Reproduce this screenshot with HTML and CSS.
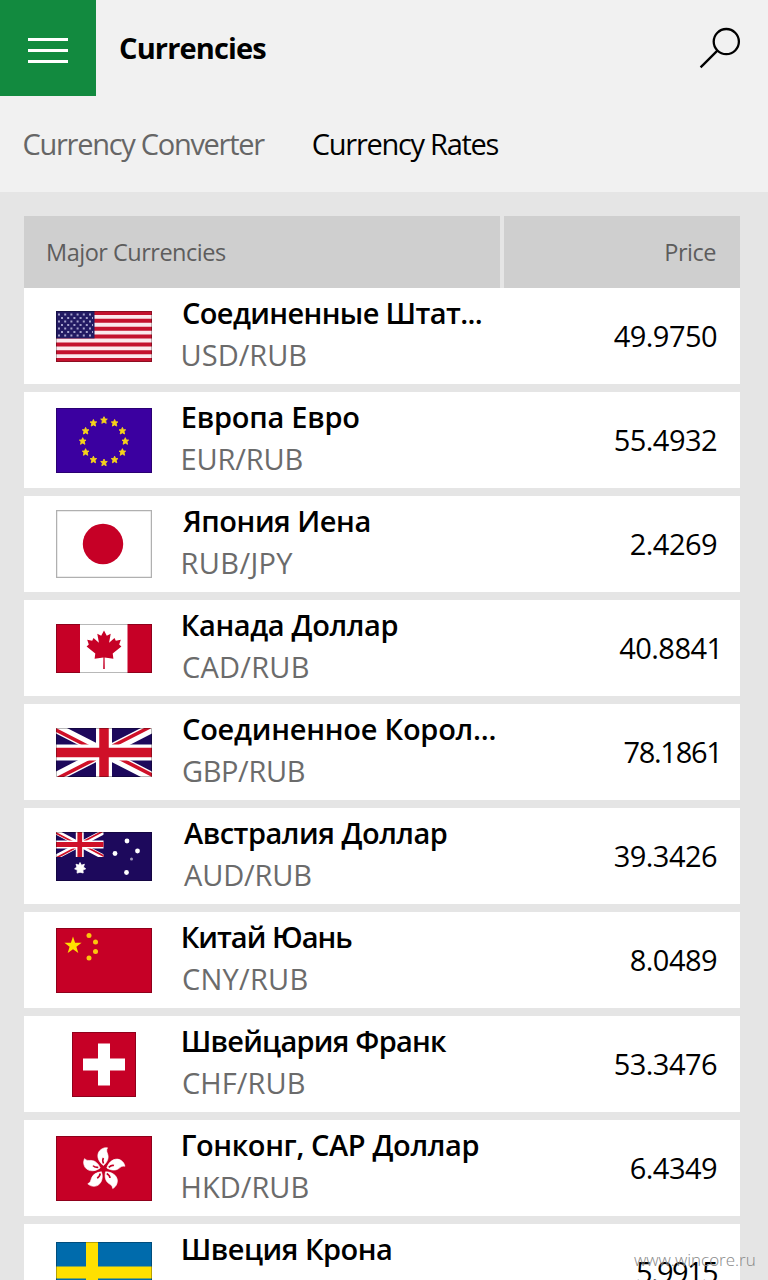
FILE: index.html
```
<!DOCTYPE html>
<html lang="ru">
<head>
<meta charset="utf-8">
<title>Currencies</title>
<link rel="stylesheet" href="styles.css">
</head>
<body>
<header class="topbar">
  <button class="menu" aria-label="Menu"><span></span><span></span><span></span></button>
  <h1 class="title">Currencies</h1>
  <svg class="search" viewBox="0 0 42 42"><circle cx="27.3" cy="14.6" r="12.6"/><path d="M18.4 23.6 1.6 40.4"/></svg>
</header>
<nav class="tabs"><a class="tab">Currency Converter</a><a class="tab active">Currency Rates</a></nav>
<main class="board">
  <div class="head"><div class="head-name">Major Currencies</div><div class="head-price">Price</div></div>
  <ul class="list">
    <li class="row usd">
      <div class="flag"><svg width="96" height="51" viewBox="0 0 96 51"><rect width="96" height="51" fill="#fbe9ee"/><path d="M0 2h96M0 9.8h96M0 17.7h96M0 25.5h96M0 33.4h96M0 41.2h96M0 49h96" stroke="#c4122f" stroke-width="4"/><rect width="38.5" height="27.4" fill="#221a63"/><path d="M2 3.5h36M2 10.5h36M2 17.5h36M2 24.5h36" stroke="#a5a2cc" stroke-width="2" stroke-dasharray="2 4.2"/><path d="M5 7h32M5 14h32M5 21h32" stroke="#a5a2cc" stroke-width="2" stroke-dasharray="2 4.2"/><rect class="edge" x=".5" y=".5" width="95" height="50"/></svg></div>
      <div class="info"><div class="name">Соединенные Штат...</div><div class="pair">USD/RUB</div></div><div class="price">49.9750</div>
    </li>
    <li class="row eur">
      <div class="flag"><svg width="96" height="65" viewBox="0 0 96 65"><rect width="96" height="65" fill="#3b00a0"/><g fill="#f5d21b"><path id="star" d="m48 8.700 1 2.300 2.300.1-1.700 1.600.6 2.600-2.200-1.200-2.200 1.200.6-2.600-1.700-1.600 2.300-.1z" stroke="#f5d21b" stroke-width=".9"/><use href="#star" x="10.600" y="2.800"/><use href="#star" x="18.400" y="10.700"/><use href="#star" x="21.300" y="21"/><use href="#star" x="18.400" y="32"/><use href="#star" x="10.600" y="39.500"/><use href="#star" y="42.400"/><use href="#star" x="-10.600" y="39.500"/><use href="#star" x="-18.400" y="32"/><use href="#star" x="-21.300" y="21"/><use href="#star" x="-18.400" y="10.700"/><use href="#star" x="-10.600" y="2.800"/></g><rect class="edge" x=".5" y=".5" width="95" height="64"/></svg></div>
      <div class="info"><div class="name">Европа Евро</div><div class="pair">EUR/RUB</div></div><div class="price">55.4932</div>
    </li>
    <li class="row jpy">
      <div class="flag"><svg width="96" height="68" viewBox="0 0 96 68"><rect x=".6" y=".6" width="94.800" height="66.800" fill="#fff" stroke="#b0b0b0" stroke-width="1.300"/><circle cx="47" cy="34" r="20.200" fill="#c60026"/></svg></div>
      <div class="info"><div class="name">Япония Иена</div><div class="pair">RUB/JPY</div></div><div class="price">2.4269</div>
    </li>
    <li class="row cad">
      <div class="flag"><svg width="96" height="49" viewBox="0 0 96 49"><rect width="96" height="49" fill="#fff"/><path d="M0 0h24v49H0zM71.500 0H96v49H71.500z" fill="#c60026"/><path d="m48 6.500 2.800 5.200 3.900-1.900-1.600 9 5.400-4.900 1.300 2.800 5-.9-1.600 4.600 2.200 2-8.700 7.100.7 5.300-8.800-1.300.2 11.500h-1.600l.2-11.500-8.800 1.300.7-5.300-8.700-7.100 2.200-2-1.600-4.600 5 .9 1.300-2.800 5.400 4.900-1.600-9 3.900 1.900z" fill="#c60026"/><rect class="edge" x=".5" y=".5" width="95" height="48"/></svg></div>
      <div class="info"><div class="name">Канада Доллар</div><div class="pair">CAD/RUB</div></div><div class="price">40.8841</div>
    </li>
    <li class="row gbp">
      <div class="flag"><svg width="96" height="49" viewBox="0 0 96 49"><g id="jack"><rect width="96" height="49" fill="#1d095c"/><svg width="96" height="49"><path d="m0 0 96 49M96 0 0 49" stroke="#fff" stroke-width="10"/><path d="M-2 1 46 25.500M98 48 50 23.500M94-1 47 23M2 50l47-24" stroke="#cf1028" stroke-width="3.600"/></svg><path d="M48 0v49M0 24.500h96" stroke="#fff" stroke-width="16"/><path d="M48 0v49M0 24.500h96" stroke="#cf1028" stroke-width="9.500"/></g><rect class="edge" x=".5" y=".5" width="95" height="48"/></svg></div>
      <div class="info"><div class="name">Соединенное Корол...</div><div class="pair">GBP/RUB</div></div><div class="price">78.1861</div>
    </li>
    <li class="row aud">
      <div class="flag"><svg width="96" height="49" viewBox="0 0 96 49"><rect width="96" height="49" fill="#1d095c"/><use href="#jack" transform="scale(.495 .51)"/><g fill="#fff"><path d="m24 30.500 1.500 2.700 2.900-1-1 2.900 2.300 1.700-2.800 1.300.3 2.900-3.200-.8-2.900.9.200-3-2.700-1.300 2.300-1.800-.9-2.800 2.900.9z" stroke="#fff" stroke-width=".8"/><circle cx="71" cy="9" r="2.400"/><circle cx="59" cy="21.500" r="2.400"/><circle cx="81.500" cy="19" r="2.400"/><circle cx="75.500" cy="27" r="1.500" opacity=".6"/><circle cx="70.500" cy="40.500" r="2.400"/></g><rect class="edge" x=".5" y=".5" width="95" height="48"/></svg></div>
      <div class="info"><div class="name">Австралия Доллар</div><div class="pair">AUD/RUB</div></div><div class="price">39.3426</div>
    </li>
    <li class="row cny">
      <div class="flag"><svg width="96" height="65" viewBox="0 0 96 65"><rect width="96" height="65" fill="#c60026"/><path d="m17 8.500 2.100 6.200h6.500l-5.200 4 1.900 6.300-5.300-3.800-5.300 3.800 1.900-6.300-5.200-4h6.500z" fill="#ffe000"/><g fill="#fbc70d"><circle cx="33" cy="7.500" r="2.500"/><circle cx="39.500" cy="14" r="2.500"/><circle cx="39.500" cy="23.500" r="2.500"/><circle cx="33" cy="30" r="2.500"/></g><rect class="edge" x=".5" y=".5" width="95" height="64"/></svg></div>
      <div class="info"><div class="name">Китай Юань</div><div class="pair">CNY/RUB</div></div><div class="price">8.0489</div>
    </li>
    <li class="row chf">
      <div class="flag"><svg width="64" height="65" viewBox="0 0 64 65"><rect width="64" height="65" fill="#c60026"/><path d="M26 11.500h12v15h15v12H38v15H26v-15H11v-12h15z" fill="#fff"/><rect class="edge" x=".5" y=".5" width="63" height="64"/></svg></div>
      <div class="info"><div class="name">Швейцария Франк</div><div class="pair">CHF/RUB</div></div><div class="price">53.3476</div>
    </li>
    <li class="row hkd">
      <div class="flag"><svg width="96" height="65" viewBox="0 0 96 65"><rect width="96" height="65" fill="#c60026"/><g id="petal"><path d="M47.500 29.500C41 25 40 17 45 13.500c2-1.500 4-2 6.500-1.700-1.500 2.700-.5 4.200.3 6.700 1.200 4-.8 8-4.300 11z" fill="#fff" stroke="#fff" stroke-width=".6"/><path d="M47.500 27.500q-1.500-3.500 0-5.500" fill="none" stroke="#c60026" stroke-width="1.600"/></g><use href="#petal" transform="rotate(72 47.500 33)"/><use href="#petal" transform="rotate(144 47.500 33)"/><use href="#petal" transform="rotate(216 47.500 33)"/><use href="#petal" transform="rotate(288 47.500 33)"/><rect class="edge" x=".5" y=".5" width="95" height="64"/></svg></div>
      <div class="info"><div class="name">Гонконг, САР Доллар</div><div class="pair">HKD/RUB</div></div><div class="price">6.4349</div>
    </li>
    <li class="row sek">
      <div class="flag"><svg width="96" height="61" viewBox="0 0 96 61"><rect width="96" height="61" fill="#006bac"/><path d="M30 0h12v61H30zM0 24.500h96v12H0z" fill="#ffe000"/><rect class="edge" x=".5" y=".5" width="95" height="60"/></svg></div>
      <div class="info"><div class="name">Швеция Крона</div></div><div class="price">5.9915</div>
    </li>
  </ul>
</main>
<div class="watermark">www.wincore.ru</div>
</body>
</html>
```
FILE: styles.css
```
* { box-sizing: border-box; margin: 0; padding: 0; }
body { position: relative; width: 768px; height: 1280px; overflow: hidden; background: #e5e5e5; color: #000; font-family: "Open Sans", "Noto Sans", sans-serif; font-size: 29px; }

.topbar { display: flex; align-items: center; height: 96px; background: #f1f1f1; padding-right: 27px; }
.menu { display: flex; flex-direction: column; align-items: center; justify-content: center; gap: 8px; width: 96px; height: 96px; border: 0; background: #128a3f; padding-top: 4px; }
.menu span { width: 40px; height: 3px; background: #fff; }
.title { flex: 1; padding-left: 23px; font-size: 29px; line-height: 96px; font-weight: 700; letter-spacing: -.85px; }
.search { width: 42px; height: 42px; fill: none; stroke: #000; stroke-width: 2.3; }

.tabs { display: flex; gap: 48px; height: 96px; padding-left: 22.5px; line-height: 96px; background: #f1f1f1; white-space: nowrap; letter-spacing: -1.28px; }
.tab { color: #666; }
.tab.active { color: #000; }

.board { padding: 24px 28px 0 24px; }
.head { display: grid; grid-template-columns: 476px 1fr; gap: 4px; color: #5d5d5d; font-size: 23.5px; line-height: 72px; letter-spacing: -.5px; }
.head > div { background: #cfcfcf; }
.head-name { padding-left: 22px; }
.head-price { padding-right: 24px; text-align: right; }

.list { display: flex; flex-direction: column; gap: 8px; list-style: none; }
.row { display: flex; height: 96px; background: #fff; padding: 0 23px 0 32px; white-space: nowrap; }
.flag { display: flex; align-items: center; justify-content: center; width: 96px; }
.flag svg { display: block; }
.edge { fill: none; stroke: #000; stroke-opacity: .28; }
.info { flex: 1; padding: 4px 0 0 28px; line-height: 42px; }
.name { font-weight: 600; padding-left: .7px; }
.pair { color: #6b6b6b; padding-left: .6px; }
.price { line-height: 96px; letter-spacing: -.55px; }

.usd .flag { padding-top: 1px; }
.usd .name { padding-left: 2px; letter-spacing: -.63px; }
.eur .name { letter-spacing: -.22px; }
.eur .pair { letter-spacing: -.17px; }
.jpy .name { padding-left: 3px; letter-spacing: -.46px; }
.jpy .pair { letter-spacing: .35px; }
.cad .name { letter-spacing: -.36px; }
.cad .pair { padding-left: 1.900px; letter-spacing: .25px; }
.cad .price { margin-right: -5.500px; }
.gbp .name { padding-left: 2px; letter-spacing: -.24px; }
.gbp .pair { padding-left: 1.900px; letter-spacing: -.35px; }
.gbp .price { margin-right: -4.500px; letter-spacing: -1.300px; }
.aud .name { padding-left: 4px; letter-spacing: -.48px; }
.aud .pair { padding-left: 4px; letter-spacing: -.15px; }
.cny .name { letter-spacing: -.98px; }
.cny .pair { padding-left: 1.900px; letter-spacing: .27px; }
.chf .name { letter-spacing: -.75px; }
.chf .pair { padding-left: 1.900px; letter-spacing: .1px; }
.hkd .name { letter-spacing: -.37px; }
.sek .name { letter-spacing: -.49px; }
.sek .price { letter-spacing: -1.600px; }

.watermark { position: absolute; left: 634px; top: 1248px; color: #888; font-size: 17px; line-height: 24px; font-weight: 300; }
```
